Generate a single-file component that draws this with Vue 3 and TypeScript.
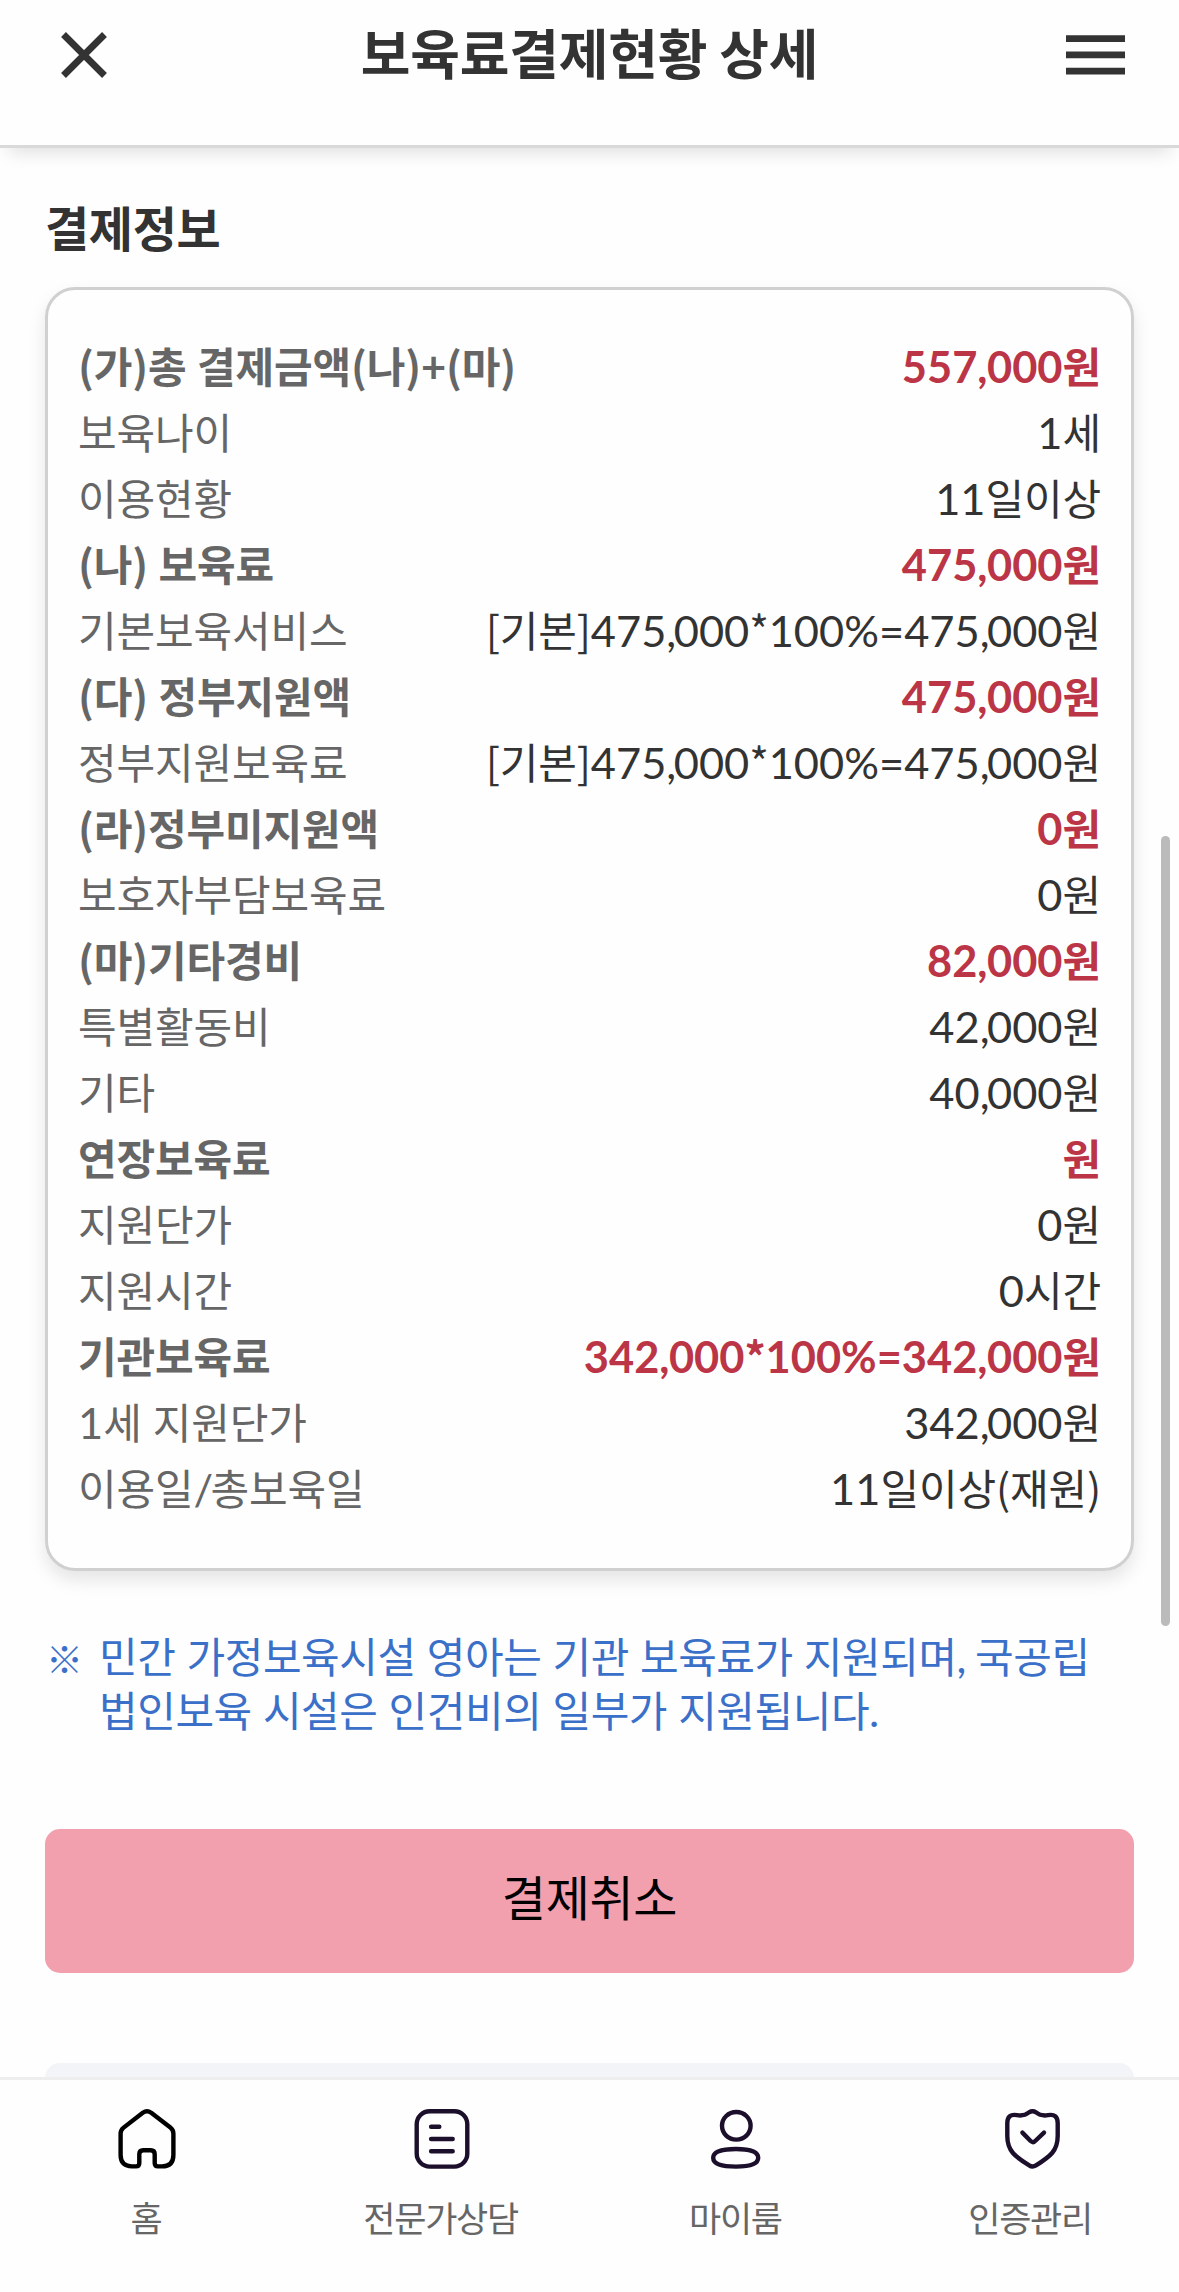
<script setup lang="ts">
interface Row {
  label: string
  value: string
  strong?: boolean
}

interface Run {
  text: string
  kind: string
}

const rows: Row[] = [
  { label: '(가)총 결제금액(나)+(마)', value: '557,000원', strong: true },
  { label: '보육나이', value: '1세' },
  { label: '이용현황', value: '11일이상' },
  { label: '(나) 보육료', value: '475,000원', strong: true },
  { label: '기본보육서비스', value: '[기본]475,000*100%=475,000원' },
  { label: '(다) 정부지원액', value: '475,000원', strong: true },
  { label: '정부지원보육료', value: '[기본]475,000*100%=475,000원' },
  { label: '(라)정부미지원액', value: '0원', strong: true },
  { label: '보호자부담보육료', value: '0원' },
  { label: '(마)기타경비', value: '82,000원', strong: true },
  { label: '특별활동비', value: '42,000원' },
  { label: '기타', value: '40,000원' },
  { label: '연장보육료', value: '원', strong: true },
  { label: '지원단가', value: '0원' },
  { label: '지원시간', value: '0시간' },
  { label: '기관보육료', value: '342,000*100%=342,000원', strong: true },
  { label: '1세 지원단가', value: '342,000원' },
  { label: '이용일/총보육일', value: '11일이상(재원)' },
]

const noteLines = [
  '민간 가정보육시설 영아는 기관 보육료가 지원되며, 국공립',
  '법인보육 시설은 인건비의 일부가 지원됩니다.',
]

const tabs = [
  { id: 'home', label: '홈' },
  { id: 'consult', label: '전문가상담' },
  { id: 'my', label: '마이룸' },
  { id: 'auth', label: '인증관리' },
]

function kindOf(part: string): string {
  const first = part[0]
  if (first === ',' || first === '/') return 'latin tight'
  if ('()[]*'.includes(first) || first.charCodeAt(0) >= 0x3000) return 'hangul'
  return 'latin'
}

// Digits are set slightly larger than the Hangul beside them; brackets and asterisks stay in the Hangul face.
function runs(text: string): Run[] {
  const parts = text.match(/[\u3000-\uffff()[\]*]+|[,/]|[^\u3000-\uffff()[\],/*]+/g) ?? []
  return parts.map((part) => ({ text: part, kind: kindOf(part) }))
}
</script>

<template>
  <div class="screen">
    <header class="topbar">
      <button class="icon-btn" aria-label="닫기">
        <svg width="46" height="46" viewBox="0 0 46 46">
          <path d="M2.5 2.5 L43.5 43.5 M43.5 2.5 L2.5 43.5" />
        </svg>
      </button>
      <h1>보육료결제현황 상세</h1>
      <button class="icon-btn" aria-label="메뉴">
        <svg width="59" height="40" viewBox="0 0 59 40">
          <path d="M0 3.6H59M0 19.9H59M0 36.2H59" />
        </svg>
      </button>
    </header>

    <main class="content">
      <h2>결제정보</h2>
      <dl class="card">
        <div v-for="row in rows" :key="row.label" class="row" :class="{ strong: row.strong }">
          <dt><span v-for="(r, i) in runs(row.label)" :key="i" :class="r.kind">{{ r.text }}</span></dt>
          <dd><span v-for="(r, i) in runs(row.value)" :key="i" :class="r.kind">{{ r.text }}</span></dd>
        </div>
      </dl>

      <div class="note">
        <span class="mark">※</span>
        <p>
          <span v-for="line in noteLines" :key="line" class="line"><span v-for="(r, i) in runs(line)" :key="i" :class="r.kind">{{ r.text }}</span></span>
        </p>
      </div>

      <button class="cancel">결제취소</button>
      <div class="panel"></div>
    </main>

    <nav class="tabbar">
      <a v-for="tab in tabs" :key="tab.id" class="tab">
        <svg v-if="tab.id === 'home'" class="home" width="60" height="60" viewBox="0 0 60 60">
          <path d="M25.8 3.8Q30 .8 34.2 3.8L53.4 18.6Q56.4 21 56.4 24.5V46Q56.4 57.4 45 57.4H41Q37.7 57.4 37.7 54V45.3Q37.7 41.3 33.7 41.3H26.3Q22.3 41.3 22.3 45.3V54Q22.3 57.4 19 57.4H15Q3.6 57.4 3.6 46V24.5Q3.6 21 6.6 18.6Z" />
        </svg>
        <svg v-else-if="tab.id === 'consult'" width="60" height="60" viewBox="0 0 60 60">
          <rect x="4.7" y="2.2" width="50.6" height="55.4" rx="13" />
          <path d="M19.1 17.7H27.3M19.1 30H40.7M19.1 42.3H40.7" />
        </svg>
        <svg v-else-if="tab.id === 'my'" width="60" height="60" viewBox="0 0 60 60">
          <ellipse cx="29.3" cy="16.8" rx="14.3" ry="13.8" />
          <path d="M29 40C43 40 51.2 42.5 51.2 48.8C51.2 55 43 57.6 29 57.6C14 57.6 6.2 55 6.2 48.8C6.2 42.5 14 40 29 40Z" />
        </svg>
        <svg v-else width="60" height="60" viewBox="0 0 60 60">
          <path d="M27 3.4Q30.5 1.2 34 3.4Q39 7.4 46 6.2Q55.7 4.4 55.7 14V27C55.7 42 48 47.5 34 56.4Q30.5 58.6 27.2 56.4C13 47.5 5.3 42 5.3 27V14Q5.3 4.4 15 6.2Q22 7.4 27 3.4Z" />
          <path d="M20.4 23.6L28.6 32Q31 34.2 33.2 32L42 23.6" />
        </svg>
        <span>{{ tab.label }}</span>
      </a>
    </nav>

    <div class="scroll-thumb"></div>
  </div>
</template>

<style>
html,
body {
  margin: 0;
  background: #fefefe;
}
</style>

<style scoped>
.screen {
  position: relative;
  display: flex;
  flex-direction: column;
  width: 1179px;
  height: 2292px;
  overflow: hidden;
  background: #fefefe;
  color: #333;
  font-family: 'Noto Sans CJK KR', sans-serif;
}
.latin {
  font-family: Lato, 'Noto Sans CJK KR', sans-serif;
  font-size: 43.4px;
  letter-spacing: 0;
  white-space: pre;
}
.tight {
  letter-spacing: -2.5px;
}
.strong .tight {
  letter-spacing: -0.5px;
}
button {
  padding: 0;
  border: 0;
  background: none;
  font-family: inherit;
}
.topbar {
  flex: none;
  display: flex;
  justify-content: space-between;
  align-items: center;
  box-sizing: border-box;
  height: 148px;
  padding: 0 54px 35px 61px;
  border-bottom: 3px solid #d9d9d9;
  box-shadow: 0 12px 18px -9px rgba(0, 0, 0, 0.14);
}
.topbar h1 {
  margin: 0 0 6px 6px;
  font-size: 54px;
  font-weight: 700;
  line-height: 78px;
  letter-spacing: -0.2px;
}
.icon-btn {
  display: flex;
}
.icon-btn svg {
  stroke: #333;
  stroke-width: 6.8;
  fill: none;
}
.content {
  flex: 1;
  min-height: 0;
  overflow: hidden;
  padding: 0 45px;
  display: flex;
  flex-direction: column;
}
h2 {
  margin: 42px 0 25px;
  font-size: 48px;
  font-weight: 700;
  line-height: 72px;
  letter-spacing: -0.3px;
}
.card {
  flex: none;
  margin: 0;
  padding: 42px 30px 48px;
  border: 3px solid #d0d0d0;
  border-radius: 30px;
  box-shadow: 0 9px 18px rgba(0, 0, 0, 0.1);
}
.row {
  display: flex;
  justify-content: space-between;
  height: 66px;
  line-height: 66px;
  font-size: 42px;
  letter-spacing: -0.15px;
  white-space: nowrap;
}
dt {
  color: #666;
}
dd {
  margin: 0;
}
.strong {
  font-weight: 700;
}
.strong dd {
  color: #bb3546;
}
.note {
  flex: none;
  display: flex;
  margin-top: 57px;
  color: #3b70c9;
  font-size: 42px;
  line-height: 54px;
  letter-spacing: -0.45px;
}
.mark {
  box-sizing: border-box;
  width: 54px;
  height: 54px;
  padding-left: 1px;
  font-size: 37px;
  font-weight: 700;
  line-height: 60px;
}
.note p {
  margin: 0;
}
.line {
  display: block;
  height: 54px;
  white-space: nowrap;
}
.cancel {
  flex: none;
  height: 144px;
  margin-top: 93px;
  padding-bottom: 13px;
  border-radius: 15px;
  background: #f29fae;
  color: #000;
  font-size: 48px;
  letter-spacing: -0.3px;
}
.panel {
  flex: none;
  height: 144px;
  margin-top: 90px;
  border-radius: 15px;
  background: #f3f4f8;
}
.tabbar {
  flex: none;
  display: flex;
  box-sizing: border-box;
  height: 215px;
  border-top: 3px solid #eee;
}
.tab {
  flex: 1;
  display: flex;
  flex-direction: column;
  align-items: center;
  padding-top: 29px;
  color: #666;
  font-size: 35px;
  line-height: 54px;
  letter-spacing: -1.3px;
}
.tab span {
  margin-left: -3px;
}
.tab svg {
  margin-bottom: 21px;
  fill: none;
  stroke: #1c0f2b;
  stroke-width: 4.4;
  stroke-linecap: round;
  stroke-linejoin: round;
}
.tab .home {
  stroke: #000;
}
.scroll-thumb {
  position: absolute;
  top: 836px;
  right: 9px;
  width: 9px;
  height: 790px;
  border-radius: 5px;
  background: #bbb;
}
</style>
